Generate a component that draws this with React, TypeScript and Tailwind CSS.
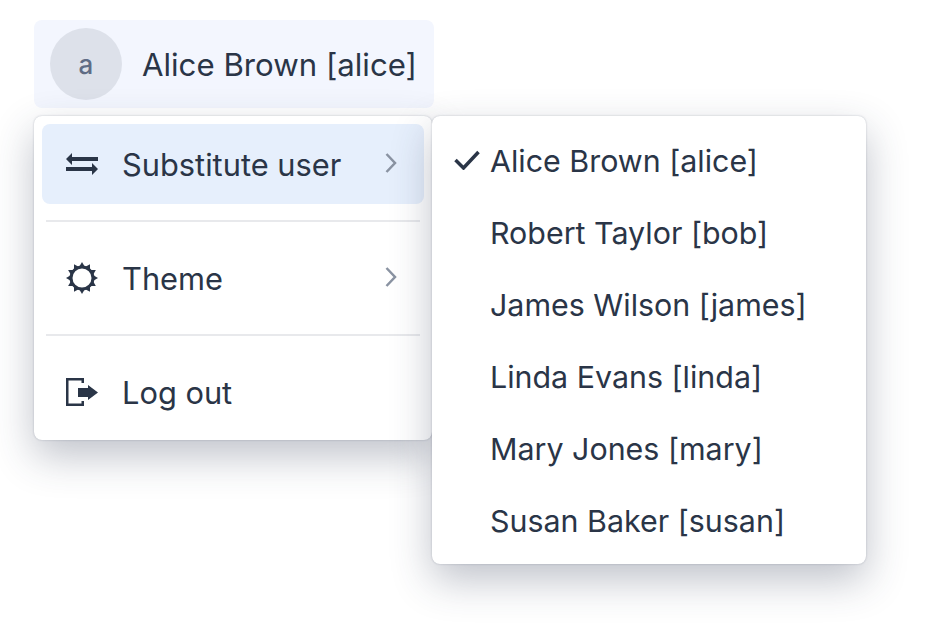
import React from 'react';

const users = [
  'Alice Brown [alice]',
  'Robert Taylor [bob]',
  'James Wilson [james]',
  'Linda Evans [linda]',
  'Mary Jones [mary]',
  'Susan Baker [susan]',
];

const SwapIcon = () => (
  <svg width="32" height="22" viewBox="0 0 32 22" fill="#2a3547">
    <path d="M0 6 6 0V4H32V8H6V12Z" />
    <path d="M32 16 26 22V18H0V14H26V10Z" />
  </svg>
);

const SunIcon = () => {
  const rays = Array.from({ length: 12 }, (_, i) => i * 30);
  return (
    <svg width="32" height="32" viewBox="0 0 32 32">
      {rays.map((deg) => (
        <path key={deg} d="M16 0 19.800 6.500H12.200Z" fill="#2a3547" transform={`rotate(${deg} 16 16)`} />
      ))}
      <circle cx="16" cy="16" r="11" fill="white" stroke="#2a3547" strokeWidth="3" />
    </svg>
  );
};

const LogoutIcon = () => (
  <svg width="32" height="28" viewBox="0 0 32 28" fill="#2a3547">
    <path d="M0 0H18V5H15.500V2.500H2.500V25.500H15.500V23H18V28H0Z" />
    <path d="M12 10H22V7L32 14.500 22 22V19H12Z" />
  </svg>
);

const Chevron = () => (
  <svg width="12" height="20" viewBox="0 0 12 20" fill="none" stroke="#8a93a2" strokeWidth="2.500" className="ml-auto -mt-0.5">
    <path d="M1.500 1 10 10 1.500 19" />
  </svg>
);

const App: React.FC = () => {
  return (
    <div className="w-[948px] h-[628px] overflow-hidden bg-white pt-5 pl-[34px] text-[#2a3547] font-['Inter',sans-serif]">
      {/* User button */}
      <div className="w-[400px] h-[88px] rounded-lg bg-[#f3f6fe] flex items-center pl-4">
        <div className="w-[72px] h-[72px] rounded-full bg-[#dde1ea] flex items-center justify-center text-[26px] font-medium text-[#5f6c85]">
          a
        </div>
        <span className="ml-5 pt-0.5 text-[31.200px] whitespace-nowrap">Alice Brown [alice]</span>
      </div>

      <div className="flex items-start mt-2">
        {/* Main menu */}
        <div className="w-[398px] h-[324px] rounded-lg bg-white p-2 text-[30.800px] shadow-[0_0_2px_rgba(42,53,80,0.3),0_16px_40px_rgba(42,53,80,0.3)]">
          <div className="h-20 rounded-lg bg-[#e6effc] flex items-center pl-6 pr-[27px]">
            <SwapIcon />
            <span className="ml-6 pt-0.5">Substitute user</span>
            <Chevron />
          </div>
          <div className="h-0.5 bg-[#e8e9ec] my-4 mx-1" />
          <div className="h-20 flex items-center pl-6 pr-[27px]">
            <SunIcon />
            <span className="ml-6 pt-0.5">Theme</span>
            <Chevron />
          </div>
          <div className="h-0.5 bg-[#e8e9ec] my-4 mx-1" />
          <div className="h-20 flex items-center pl-6 pr-[27px]">
            <LogoutIcon />
            <span className="ml-6 pt-0.5">Log out</span>
          </div>
        </div>

        {/* Users submenu */}
        <div className="relative z-10 w-[434px] h-[448px] rounded-lg bg-white py-2 text-[30.400px] shadow-[0_0_2px_rgba(42,53,80,0.3),0_16px_40px_rgba(42,53,80,0.3)]">
          {users.map((name, index) => (
            <div key={name} className="h-[72px] flex items-center pl-[22px]">
              <span className="w-9 flex">
                {index === 0 && (
                  <svg width="26" height="20" viewBox="0 0 26 20" fill="none" stroke="#2a3547" strokeWidth="3.500">
                    <path d="M1.500 10 9.500 18 24.500 2" />
                  </svg>
                )}
              </span>
              <span className="pt-1 whitespace-nowrap">{name}</span>
            </div>
          ))}
        </div>
      </div>
    </div>
  );
};

export default App;
